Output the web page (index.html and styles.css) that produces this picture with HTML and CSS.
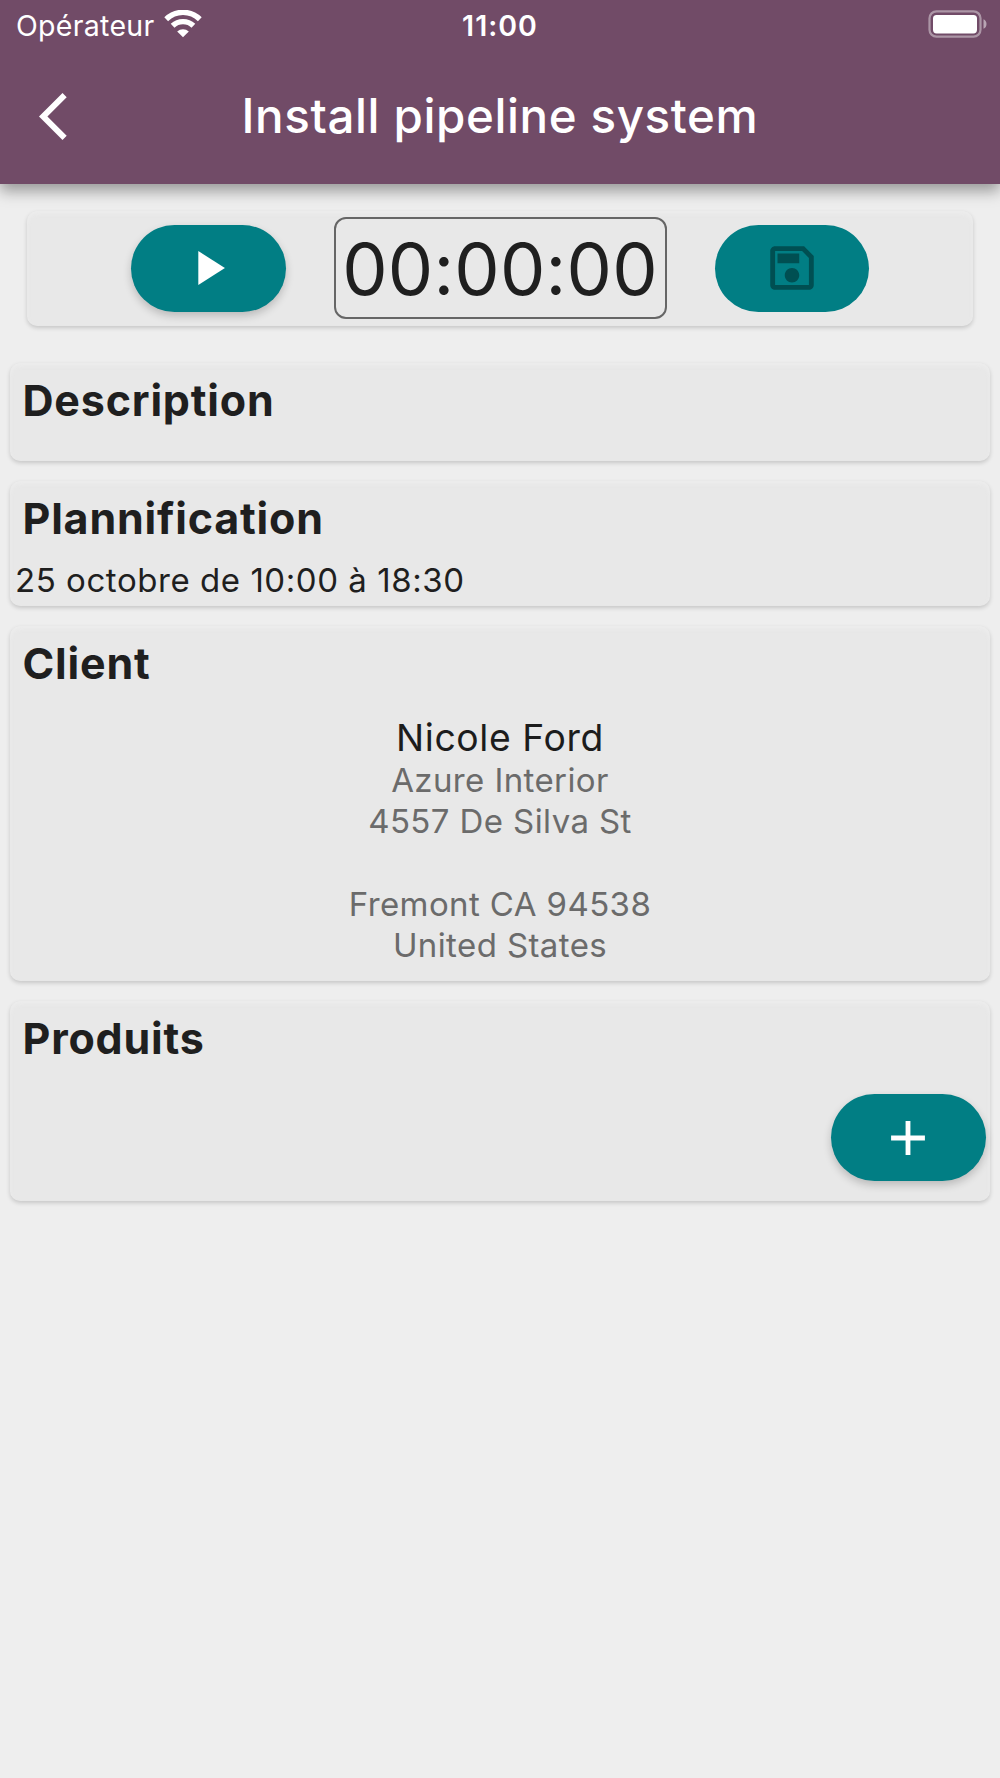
FILE: index.html
```html
<!DOCTYPE html>
<html lang="fr">
<head>
    <meta charset="UTF-8">
    <title>Install pipeline system</title>
    <link rel="stylesheet" href="styles.css">
</head>
<body>
    <header class="app-bar">
        <div class="status-bar">
            <div class="carrier">
                <span class="carrier-name">Opérateur</span>
                <svg class="wifi" width="38" height="28" viewBox="0 0 38 28">
                    <path d="M2.2 9.2A24 24 0 0 1 35.8 9.2" fill="none" stroke="#fff" stroke-width="5.4"/>
                    <path d="M8.6 15.8A15 15 0 0 1 29.4 15.8" fill="none" stroke="#fff" stroke-width="5.4"/>
                    <path d="M13.2 21.5A8.5 8.5 0 0 1 24.8 21.5L19 27.3z" fill="#fff"/>
                </svg>
            </div>
            <div class="clock">11:00</div>
            <svg class="battery" width="60" height="28" viewBox="0 0 60 28">
                <rect x="1.5" y="1.3" width="51" height="25.4" rx="7" fill="none" stroke="#fff" stroke-opacity=".42" stroke-width="2.2"/>
                <rect x="5" y="5" width="44" height="18.4" rx="3.6" fill="#fff"/>
                <path d="M55.5 9.2c4 1.4 4 8.2 0 9.6z" fill="#fff" fill-opacity=".5"/>
            </svg>
        </div>
        <div class="nav-bar">
            <svg class="back" width="57" height="57" viewBox="0 0 24 24">
                <path d="M11.67 3.87L9.9 2.1 0 12l9.9 9.9 1.77-1.77L3.54 12z" fill="#fff"/>
            </svg>
            <h1 class="title">Install pipeline system</h1>
        </div>
    </header>

    <main class="content">
        <section class="card timer-card">
            <button class="btn">
                <svg width="58" height="58" viewBox="0 0 24 24"><path d="M8 5v14l11-7z" fill="#fff"/></svg>
            </button>
            <div class="timer">00:00:00</div>
            <button class="btn disabled">
                <svg width="58" height="58" viewBox="0 0 24 24">
                    <path d="M17 3H5c-1.11 0-2 .9-2 2v14c0 1.1.89 2 2 2h14c1.1 0 2-.9 2-2V7l-4-4zm2 16H5V5h11.17L19 7.83V19zm-7-7c-1.66 0-3 1.34-3 3s1.34 3 3 3 3-1.34 3-3-1.34-3-3-3zM6 6h9v4H6V6z" fill="#004f52"/>
                </svg>
            </button>
        </section>

        <section class="card description">
            <h2 class="card-title">Description</h2>
        </section>

        <section class="card planning">
            <h2 class="card-title">Plannification</h2>
            <p class="date">25 octobre de 10:00 à 18:30</p>
        </section>

        <section class="card client">
            <h2 class="card-title">Client</h2>
            <div class="client-name">Nicole Ford</div>
            <div class="address">
                Azure Interior<br>
                4557 De Silva St<br>
                <br>
                Fremont CA 94538<br>
                United States
            </div>
        </section>

        <section class="card products">
            <h2 class="card-title">Produits</h2>
            <button class="btn add">
                <svg width="58" height="58" viewBox="0 0 24 24"><path d="M19 13h-6v6h-2v-6H5v-2h6V5h2v6h6v2z" fill="#fff"/></svg>
            </button>
        </section>
    </main>
</body>
</html>
```

FILE: styles.css
```css
* {
    box-sizing: border-box;
}
body {
    margin: 0;
    min-height: 1778px;
    background: #eee;
    color: #1f1f1f;
    font-family: Inter, "Liberation Sans", sans-serif;
}
h1, h2, p {
    margin: 0;
}
svg {
    display: block;
}

/* header */
.app-bar {
    height: 184px;
    background: #714b67;
    color: #fff;
    box-shadow: 0 7px 14px rgba(0, 0, 0, 0.36);
}
.status-bar {
    display: grid;
    grid-template-columns: 1fr auto 1fr;
    height: 48px;
    padding: 0 12px 0 16px;
    align-items: center;
    font-size: 28.5px;
}
.carrier {
    display: flex;
    align-items: center;
    gap: 9px;
}
.carrier-name {
    letter-spacing: 0.3px;
    line-height: 34px;
    margin-top: 3px;
}
.clock {
    font-weight: 600;
    letter-spacing: 1px;
    margin: 2px 4px 0 0;
}
.battery {
    justify-self: end;
}
.nav-bar {
    display: grid;
    grid-template-columns: 57px 1fr 57px;
    height: 136px;
    padding: 0 39px;
    align-items: center;
}
.title {
    padding-bottom: 2px;
    font-size: 47.5px;
    font-weight: 500;
    letter-spacing: 0.6px;
    text-align: center;
    white-space: nowrap;
}

/* cards */
.content {
    display: flex;
    flex-direction: column;
    gap: 20px;
    padding: 27px 10px 0;
}
.card {
    background: #e8e8e8;
    border-radius: 10px;
    box-shadow: 0 2px 4px rgba(0, 0, 0, 0.17), inset 0 3px 4px rgba(240, 240, 240, 0.6);
}
.card-title {
    padding: 12px 12.5px 0;
    font-size: 43px;
    font-weight: 700;
    line-height: 51px;
    letter-spacing: 0.8px;
}
.timer-card {
    display: flex;
    justify-content: center;
    align-items: center;
    gap: 48px;
    height: 115px;
    margin: 0 17px 17px;
    padding-bottom: 1px;
}
.timer {
    width: 333px;
    height: 102px;
    border: 2px solid #666;
    border-radius: 12px;
    font-size: 72px;
    line-height: 100px;
    letter-spacing: 0.2px;
    text-align: center;
    white-space: nowrap;
}
.btn {
    display: flex;
    align-items: center;
    justify-content: center;
    width: 154.5px;
    height: 87px;
    padding: 0;
    border: 0;
    border-radius: 44px;
    background: #017e84;
    box-shadow: 0 4px 8px rgba(0, 0, 0, 0.2);
}
.btn.disabled {
    box-shadow: none;
}
.description {
    height: 98px;
}
.planning {
    height: 125px;
}
.date {
    padding: 16px 5px 0;
    font-size: 33px;
    line-height: 40px;
    letter-spacing: 0.55px;
}
.client {
    height: 355px;
    text-align: center;
}
.client .card-title {
    text-align: left;
}
.client-name {
    margin-top: 26px;
    font-size: 37.3px;
    line-height: 46px;
    letter-spacing: 0.6px;
    color: #1c1c1c;
}
.address {
    margin-top: -1px;
    font-size: 33px;
    line-height: 41.2px;
    letter-spacing: 0.4px;
    color: #6b6b6b;
}
.products {
    height: 200px;
}
.add {
    margin: 30px 4.5px 0 auto;
}
```
